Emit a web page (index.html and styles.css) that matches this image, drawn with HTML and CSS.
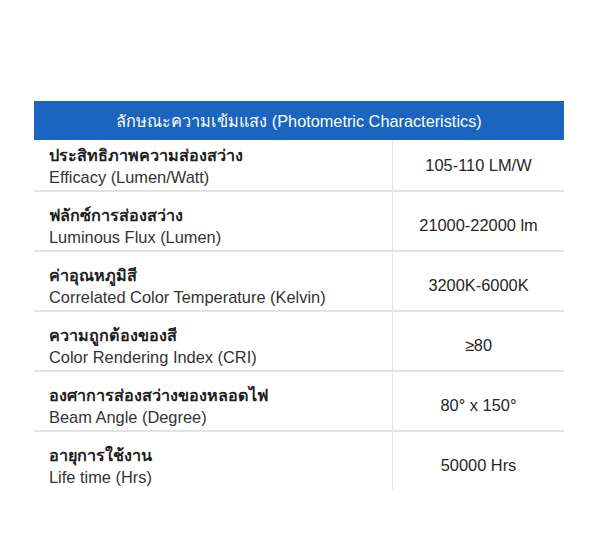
FILE: index.html
```html
<!DOCTYPE html>
<html lang="th">
<head>
<meta charset="utf-8">
<title>Photometric Characteristics</title>
<link rel="stylesheet" href="styles.css">
</head>
<body>
<div class="page">
  <section class="spec">
    <div class="spec-head">ลักษณะความเข้มแสง (Photometric Characteristics)</div>
    <div class="row">
      <div class="label"><div class="th">ประสิทธิภาพความส่องสว่าง</div><div class="en">Efficacy (Lumen/Watt)</div></div>
      <div class="value">105-110 LM/W</div>
    </div>
    <div class="row">
      <div class="label"><div class="th">ฟลักซ์การส่องสว่าง</div><div class="en">Luminous Flux (Lumen)</div></div>
      <div class="value">21000-22000 lm</div>
    </div>
    <div class="row">
      <div class="label"><div class="th">ค่าอุณหภูมิสี</div><div class="en">Correlated Color Temperature (Kelvin)</div></div>
      <div class="value">3200K-6000K</div>
    </div>
    <div class="row">
      <div class="label"><div class="th">ความถูกต้องของสี</div><div class="en">Color Rendering Index (CRI)</div></div>
      <div class="value">≥80</div>
    </div>
    <div class="row">
      <div class="label"><div class="th">องศาการส่องสว่างของหลอดไฟ</div><div class="en">Beam Angle (Degree)</div></div>
      <div class="value">80° x 150°</div>
    </div>
    <div class="row">
      <div class="label"><div class="th">อายุการใช้งาน</div><div class="en">Life time (Hrs)</div></div>
      <div class="value">50000 Hrs</div>
    </div>
  </section>
</div>
</body>
</html>
```
FILE: styles.css
```css
html, body {
  margin: 0;
  padding: 0;
  background: #ffffff;
}
body {
  font-family: "Liberation Sans", Arial, sans-serif;
  color: #2a2a2a;
}
.page {
  padding: 101px 36px 0 34px;
}
.spec {
  width: 530px;
}
.spec-head {
  height: 39px;
  background: #1b64c0;
  color: #ffffff;
  font-size: 16.3px;
  display: flex;
  align-items: center;
  justify-content: center;
}
.row {
  display: grid;
  grid-template-columns: 358px 1fr;
  border-bottom: 2px solid #e3e3e3;
}
.row:last-child {
  border-bottom: none;
}
.label {
  padding: 12px 0 2px 15px;
}
.spec-head + .row .label {
  padding-top: 4px;
}
.th {
  font-size: 16.2px;
  font-weight: bold;
  line-height: 22px;
  color: #1e1e1e;
}
.en {
  font-size: 16.4px;
  line-height: 22px;
  color: #333333;
}
.value {
  border-left: 1px solid #e6e6e6;
  display: flex;
  align-items: center;
  justify-content: center;
  font-size: 16.4px;
  color: #262626;
  padding-top: 8px;
}
.spec-head + .row .value {
  padding-top: 0;
}
```
